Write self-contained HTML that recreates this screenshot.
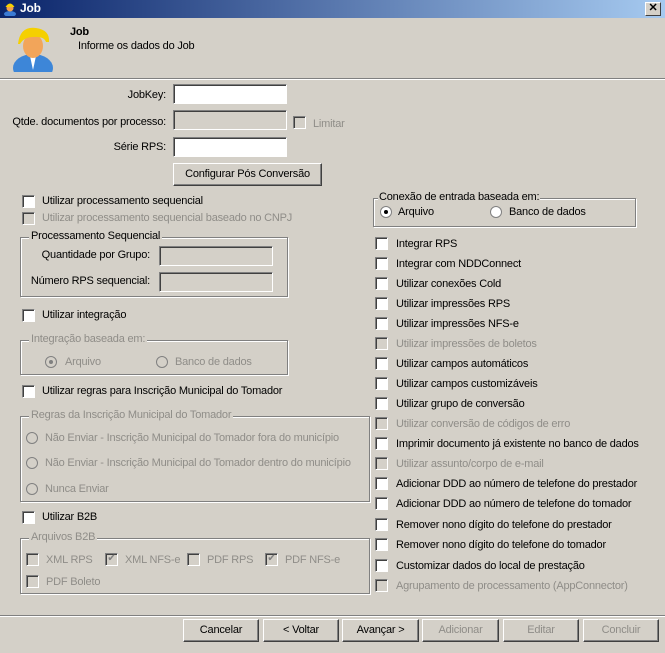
<!DOCTYPE html><html><head><meta charset="utf-8"><style>
body{margin:0;width:665px;height:653px;background:#d4d0c8;font-family:"Liberation Sans",sans-serif;font-size:11px;color:#000;position:relative;overflow:hidden;letter-spacing:-0.2px}
div,span{position:absolute;box-sizing:border-box}
.t{white-space:nowrap;line-height:13px}
.d{color:#8f8d88}
.cb{width:13px;height:13px;background:#fff;border:1px solid;border-color:#808080 #fff #fff #808080;box-shadow:inset 1px 1px 0 #404040}
.cb.x{background:#d4d0c8}
.rd{width:12px;height:12px;border-radius:50%;background:#fff;border:1px solid #808080}
.rd.x{background:#d4d0c8}
.rd i{position:absolute;left:3px;top:3px;width:4px;height:4px;border-radius:50%;background:#000}
.rd.x i{background:#808080}
.in{height:20px;background:#fff;border:1px solid;border-color:#808080 #fff #fff #808080;box-shadow:inset 1px 1px 0 #404040}
.in.x{background:#d4d0c8}
.g{border:1px solid #808080;box-shadow:1px 1px 0 #fff,inset 1px 1px 0 #fff}
.g>.l{top:-8px;left:8px;background:#d4d0c8;padding:0 2px}
.b{height:23px;border:1px solid;border-color:#fff #404040 #404040 #fff;box-shadow:inset -1px -1px 0 #808080;text-align:center;line-height:21px}
</style></head><body>
<div style="left:0;top:0;width:665px;height:18px;background:linear-gradient(90deg,#0a246a,#a6caf0)"></div>
<div style="left:3px;top:1px;width:14px;height:15px"><svg width="14" height="15"><ellipse cx="7" cy="13" rx="6" ry="3" fill="#3a7bd5"/><circle cx="7" cy="7" r="3.5" fill="#f0a050"/><path d="M2.5 6 Q7 -1 11.5 6Z" fill="#f5d000"/></svg></div>
<div class="t" style="left:20px;top:2px;color:#fff;font-weight:bold;font-size:12px">Job</div>
<div style="left:645px;top:2px;width:16px;height:14px;background:#d4d0c8;border:1px solid;border-color:#fff #404040 #404040 #fff;text-align:center;font-weight:bold;line-height:11px;font-size:11px">✕</div>
<svg style="position:absolute;left:10px;top:24px" width="46" height="48"><ellipse cx="23" cy="44" rx="20" ry="14" fill="#3d86d8"/><path d="M20 32 L23 46 L26 32Z" fill="#fff"/><ellipse cx="23" cy="22" rx="10" ry="12" fill="#f2a55a"/><path d="M8 20 Q10 2 26 4 Q40 6 39 18 L36 18 Q34 12 23 13 Q14 13 10 20Z" fill="#f5d000"/></svg>
<div class="t" style="left:70px;top:26px;font-weight:bold">Job</div>
<div class="t" style="left:78px;top:40px">Informe os dados do Job</div>
<div style="left:0;top:78px;width:665px;height:2px;border-top:1px solid #808080;border-bottom:1px solid #fff"></div>

<div class="t" style="left:0;width:166px;text-align:right;top:89px">JobKey:</div>
<div class="in" style="left:173px;top:84px;width:114px"></div>
<div class="t" style="left:0;width:166px;text-align:right;top:116px">Qtde. documentos por processo:</div>
<div class="in x" style="left:173px;top:110px;width:114px;height:20px"></div>
<div class="cb x" style="left:293px;top:116px"></div><div class="t d" style="left:313px;top:118px">Limitar</div>
<div class="t" style="left:0;width:166px;text-align:right;top:141px">Série RPS:</div>
<div class="in" style="left:173px;top:137px;width:114px"></div>
<div class="b" style="left:173px;top:163px;width:149px">Configurar Pós Conversão</div>

<div class="cb" style="left:22px;top:195px"></div><div class="t" style="left:42px;top:195px">Utilizar processamento sequencial</div>
<div class="cb x" style="left:22px;top:212px"></div><div class="t d" style="left:42px;top:212px">Utilizar processamento sequencial baseado no CNPJ</div>
<div class="g" style="left:20px;top:237px;width:268px;height:60px"><span class="t l">Processamento Sequencial</span></div>
<div class="t" style="left:0;width:150px;text-align:right;top:249px">Quantidade por Grupo:</div>
<div class="in x" style="left:159px;top:246px;width:114px"></div>
<div class="t" style="left:0;width:150px;text-align:right;top:275px">Número RPS sequencial:</div>
<div class="in x" style="left:159px;top:272px;width:114px"></div>
<div class="cb" style="left:22px;top:309px"></div><div class="t" style="left:42px;top:309px">Utilizar integração</div>
<div class="g" style="left:20px;top:340px;width:268px;height:35px"><span class="t l d">Integração baseada em:</span></div>
<div class="rd x" style="left:45px;top:356px"><i></i></div><div class="t d" style="left:65px;top:356px">Arquivo</div>
<div class="rd x" style="left:156px;top:356px"></div><div class="t d" style="left:175px;top:356px">Banco de dados</div>
<div class="cb" style="left:22px;top:385px"></div><div class="t" style="left:42px;top:385px">Utilizar regras para Inscrição Municipal do Tomador</div>
<div class="g" style="left:20px;top:416px;width:350px;height:86px"><span class="t l d">Regras da Inscrição Municipal do Tomador</span></div>
<div class="rd x" style="left:26px;top:432px"></div><div class="t d" style="left:45px;top:432px">Não Enviar - Inscrição Municipal do Tomador fora do município</div>
<div class="rd x" style="left:26px;top:457px"></div><div class="t d" style="left:45px;top:457px">Não Enviar - Inscrição Municipal do Tomador dentro do município</div>
<div class="rd x" style="left:26px;top:483px"></div><div class="t d" style="left:45px;top:483px">Nunca Enviar</div>
<div class="cb" style="left:22px;top:511px"></div><div class="t" style="left:42px;top:511px">Utilizar B2B</div>
<div class="g" style="left:20px;top:538px;width:350px;height:56px"><span class="t l d">Arquivos B2B</span></div>
<div class="cb x" style="left:26px;top:553px"></div><div class="t d" style="left:46px;top:554px">XML RPS</div>
<div class="cb x" style="left:105px;top:553px;color:#808080;font-size:10px;line-height:10px;text-align:center">✔</div><div class="t d" style="left:125px;top:554px">XML NFS-e</div>
<div class="cb x" style="left:187px;top:553px"></div><div class="t d" style="left:207px;top:554px">PDF RPS</div>
<div class="cb x" style="left:265px;top:553px;color:#808080;font-size:10px;line-height:10px;text-align:center">✔</div><div class="t d" style="left:285px;top:554px">PDF NFS-e</div>
<div class="cb x" style="left:26px;top:575px"></div><div class="t d" style="left:46px;top:576px">PDF Boleto</div>

<div class="g" style="left:373px;top:198px;width:263px;height:29px"><span class="t l" style="left:4px;padding:0 1px">Conexão de entrada baseada em:</span></div>
<div class="rd" style="left:380px;top:206px"><i></i></div><div class="t" style="left:398px;top:206px">Arquivo</div>
<div class="rd" style="left:490px;top:206px"></div><div class="t" style="left:509px;top:206px">Banco de dados</div>

<div class="cb" style="left:375px;top:237px"></div><div class="t" style="left:396px;top:238px">Integrar RPS</div>
<div class="cb" style="left:375px;top:257px"></div><div class="t" style="left:396px;top:258px">Integrar com NDDConnect</div>
<div class="cb" style="left:375px;top:277px"></div><div class="t" style="left:396px;top:278px">Utilizar conexões Cold</div>
<div class="cb" style="left:375px;top:297px"></div><div class="t" style="left:396px;top:298px">Utilizar impressões RPS</div>
<div class="cb" style="left:375px;top:317px"></div><div class="t" style="left:396px;top:318px">Utilizar impressões NFS-e</div>
<div class="cb x" style="left:375px;top:337px"></div><div class="t d" style="left:396px;top:338px">Utilizar impressões de boletos</div>
<div class="cb" style="left:375px;top:357px"></div><div class="t" style="left:396px;top:358px">Utilizar campos automáticos</div>
<div class="cb" style="left:375px;top:377px"></div><div class="t" style="left:396px;top:378px">Utilizar campos customizáveis</div>
<div class="cb" style="left:375px;top:397px"></div><div class="t" style="left:396px;top:398px">Utilizar grupo de conversão</div>
<div class="cb x" style="left:375px;top:417px"></div><div class="t d" style="left:396px;top:418px">Utilizar conversão de códigos de erro</div>
<div class="cb" style="left:375px;top:437px"></div><div class="t" style="left:396px;top:438px">Imprimir documento já existente no banco de dados</div>
<div class="cb x" style="left:375px;top:457px"></div><div class="t d" style="left:396px;top:458px">Utilizar assunto/corpo de e-mail</div>
<div class="cb" style="left:375px;top:477px"></div><div class="t" style="left:396px;top:478px">Adicionar DDD ao número de telefone do prestador</div>
<div class="cb" style="left:375px;top:497px"></div><div class="t" style="left:396px;top:498px">Adicionar DDD ao número de telefone do tomador</div>
<div class="cb" style="left:375px;top:518px"></div><div class="t" style="left:396px;top:519px">Remover nono dígito do telefone do prestador</div>
<div class="cb" style="left:375px;top:538px"></div><div class="t" style="left:396px;top:539px">Remover nono dígito do telefone do tomador</div>
<div class="cb" style="left:375px;top:559px"></div><div class="t" style="left:396px;top:560px">Customizar dados do local de prestação</div>
<div class="cb x" style="left:375px;top:579px"></div><div class="t d" style="left:396px;top:580px">Agrupamento de processamento (AppConnector)</div>

<div style="left:0;top:615px;width:665px;height:2px;border-top:1px solid #808080;border-bottom:1px solid #fff"></div>
<div class="b" style="left:183px;top:619px;width:76px">Cancelar</div>
<div class="b" style="left:263px;top:619px;width:76px">&lt; Voltar</div>
<div class="b" style="left:342px;top:619px;width:77px">Avançar &gt;</div>
<div class="b d" style="left:422px;top:619px;width:77px">Adicionar</div>
<div class="b d" style="left:503px;top:619px;width:76px">Editar</div>
<div class="b d" style="left:583px;top:619px;width:76px">Concluir</div>
</body></html>
